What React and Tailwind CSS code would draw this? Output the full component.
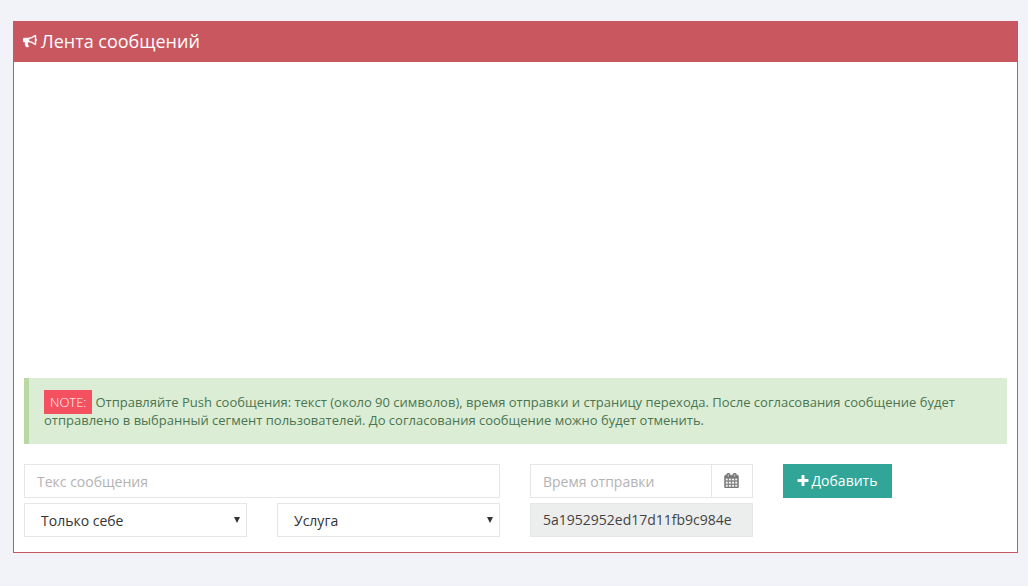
import React from "react";

function Fa({ d, className }) {
  return (
    <svg viewBox="0 0 1792 1792" className={className} fill="currentColor" aria-hidden="true">
      <path d={d} />
    </svg>
  );
}

const bullhorn =
  "M1664 640q53 0 90.5 37.5t37.5 90.5-37.5 90.5-90.5 37.5v384q0 52-38 90t-90 38q-417-347-812-380-58 19-91 66t-31 100.5 40 92.5q-20 33-23 65.5t6 58 33.5 55 48 50 61.5 50.5q-29 58-111.5 83t-168.5 11.5-132-55.5q-7-23-29.5-87.5t-32-94.5-23-89-15-101 3.5-98.5 22-110.5h-122q-66 0-113-47t-47-113v-192q0-66 47-113t113-47h480q435 0 896-384 52 0 90 38t38 90v384zm-128 604v-954q-394 302-768 343v270q377 42 768 341z";
const plus =
  "M1600 736v192q0 40-28 68t-68 28h-416v416q0 40-28 68t-68 28h-192q-40 0-68-28t-28-68v-416h-416q-40 0-68-28t-28-68v-192q0-40 28-68t68-28h416v-416q0-40 28-68t68-28h192q40 0 68 28t28 68v416h416q40 0 68 28t28 68z";
const calendar =
  "M192 1664h288v-288h-288v288zm352 0h320v-288h-320v288zm-352-352h288v-320h-288v320zm352 0h320v-320h-320v320zm-352-384h288v-288h-288v288zm736 736h320v-288h-320v288zm-384-736h320v-288h-320v288zm768 736h288v-288h-288v288zm-384-352h320v-320h-320v320zm-352-864v-288q0-13-9.5-22.5t-22.5-9.5h-64q-13 0-22.5 9.5t-9.5 22.5v288q0 13 9.5 22.5t22.5 9.5h64q13 0 22.5-9.5t9.5-22.5zm736 864h288v-320h-288v320zm-384-384h320v-288h-320v288zm384 0h288v-288h-288v288zm32-480v-288q0-13-9.5-22.5t-22.5-9.5h-64q-13 0-22.5 9.5t-9.5 22.5v288q0 13 9.5 22.5t22.5 9.5h64q13 0 22.5-9.5t9.5-22.5zm384-64v1280q0 52-38 90t-90 38h-1408q-52 0-90-38t-38-90v-1280q0-52 38-90t90-38h128v-96q0-66 47-113t113-47h64q66 0 113 47t47 113v96h384v-96q0-66 47-113t113-47h64q66 0 113 47t47 113v96h128q52 0 90 38t38 90z";

function Select({ children }) {
  return (
    <div className="relative flex h-[34px] w-[223px] items-center border border-[#e5e6e7] bg-white pl-4 pt-[2px] text-[14px] text-[#333]">
      {children}
      <span className="absolute right-[6px] top-[13px] h-0 w-0 border-x-[3px] border-t-[6px] border-x-transparent border-t-[#333]" />
    </div>
  );
}

export default function App() {
  return (
    <div className="min-h-[586px] bg-[#f1f3f9] px-[13px] pt-[21px] font-['Open_Sans',sans-serif] leading-[20px]">
      <div className="h-[532px] w-[1005px] border border-t-0 border-[#c9575f] bg-white">
        <div className="flex h-[41px] items-center gap-[4px] bg-[#c9575f] pb-[2px] pl-[9px] text-[18px] text-white">
          <Fa d={bullhorn} className="h-[14px] w-[14px] stroke-white stroke-[50px]" />
          <span>Лента сообщений</span>
        </div>
        <div className="px-[10px] pt-[316px]">
          <div className="h-[66px] border-l-[5px] border-[#b9d8a4] bg-[#dcedd6] pl-[15px] pr-4 pt-[15px] text-[13px] leading-[18px] text-[#4a7550]">
            <span className="mr-[3px] bg-[#f4505f] px-[6px] py-[3px] font-light text-white">NOTE:</span>
            Отправляйте Push сообщения: текст (около 90 символов), время отправки и страницу перехода. После согласования сообщение будет отправлено в выбранный сегмент пользователей. До согласования сообщение можно будет отменить.
          </div>
          <div className="mt-[20px] flex gap-[30px]">
            <div className="flex w-[476px] flex-col gap-[5px]">
              <div className="flex h-[34px] items-center border border-[#e5e6e7] pl-3 pt-[2px] text-[14px] text-[#b3b3b3]">Текс сообщения</div>
              <div className="flex gap-[30px]">
                <Select>Только себе</Select>
                <Select>Услуга</Select>
              </div>
            </div>
            <div className="flex w-[223px] flex-col gap-[5px]">
              <div className="flex h-[34px] border border-[#e5e6e7] text-[14px] text-[#b3b3b3]">
                <div className="flex flex-1 items-center pl-3 pt-[2px]">Время отправки</div>
                <div className="flex w-[41px] items-center justify-center border-l border-[#e5e6e7] pb-[2px] pr-[2px] text-[#777]">
                  <Fa d={calendar} className="h-[15px] w-[15px] stroke-[#777] stroke-[70px]" />
                </div>
              </div>
              <div className="flex h-[34px] items-center border border-[#e5e6e7] bg-[#eceded] pl-3 text-[14px] text-[#444]">5a1952952ed17d11fb9c984e</div>
            </div>
            <div className="flex h-[34px] w-[109px] items-center justify-center gap-[2px] bg-[#31a597] pr-[2px] text-[14px] text-white">
              <Fa d={plus} className="h-[14px] w-[14px]" />
              <span>Добавить</span>
            </div>
          </div>
        </div>
      </div>
    </div>
  );
}
